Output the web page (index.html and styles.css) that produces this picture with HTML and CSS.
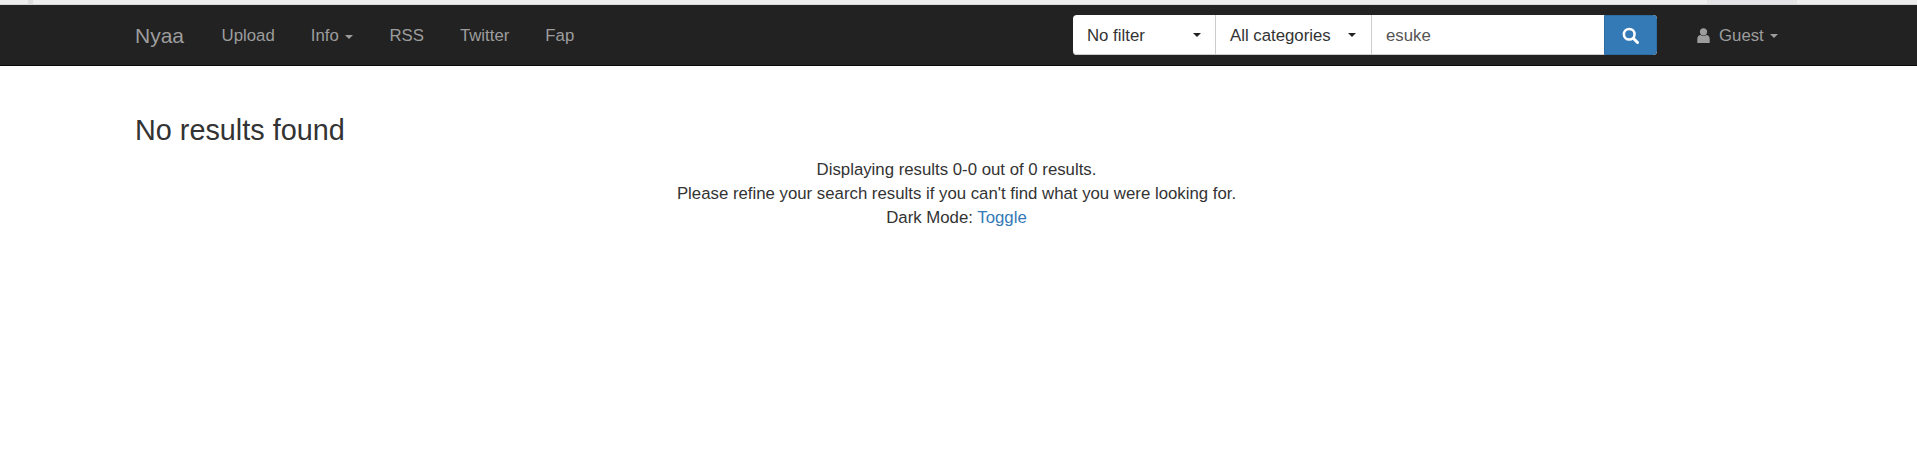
FILE: index.html
```html
<!DOCTYPE html>
<html lang="en">
<head>
<meta charset="utf-8">
<title>Nyaa</title>
<link rel="stylesheet" href="styles.css">
</head>
<body>
<div class="chrome"><span class="chrome-tab"></span><span class="chrome-shadow"></span></div>
<nav class="navbar">
  <div class="nav-inner">
    <a class="brand" href="#">Nyaa</a>
    <ul class="nav-links">
      <li><a href="#">Upload</a></li>
      <li><a href="#">Info <span class="caret"></span></a></li>
      <li><a href="#">RSS</a></li>
      <li><a href="#">Twitter</a></li>
      <li><a href="#">Fap</a></li>
    </ul>
    <form class="search">
      <div class="select filter"><span class="select-label">No filter</span><span class="caret dark"></span></div>
      <div class="select cats"><span class="select-label">All categories</span><span class="caret dark"></span></div>
      <div class="query">esuke</div>
      <button class="go" type="button" aria-label="Search">
        <svg width="17" height="17" viewBox="0 0 16 16"><circle cx="6.8" cy="6.8" r="5" fill="none" stroke="#fff" stroke-width="2.4"/><path d="M10.6 10.6 14.6 14.6" stroke="#fff" stroke-width="2.8" stroke-linecap="round"/></svg>
      </button>
    </form>
    <a class="guest" href="#">
      <svg width="13" height="15" viewBox="0 0 13 15"><circle cx="6.5" cy="3.8" r="3.6" fill="#9d9d9d"/><path d="M0.300 15V11C0.300 8.500 2 7 3.600 7 4.400 7.700 5.400 8.100 6.500 8.100S8.600 7.700 9.400 7C11 7 12.700 8.500 12.700 11V15Z" fill="#9d9d9d"/></svg>
      <span class="guest-name">Guest</span><span class="caret"></span>
    </a>
  </div>
</nav>
<main class="content">
  <h3 class="title">No results found</h3>
  <div class="center">
    Displaying results 0-0 out of 0 results.<br>
    Please refine your search results if you can't find what you were looking for.<br>
    Dark Mode: <a href="#">Toggle</a>
  </div>
</main>
</body>
</html>
```
FILE: styles.css
```css
* { box-sizing: border-box; }
html, body { margin: 0; padding: 0; background: #fff; }
body { font-family: "Liberation Sans", Arial, sans-serif; font-size: 16.8px; line-height: 24px; color: #333; }
a { text-decoration: none; }
.chrome { height: 5px; background: #eeeeee; border-bottom: 1px solid #d8d8d8; display: flex; }
.chrome-tab { width: 5px; height: 4px; margin-left: 28px; background: #dedede; }
.chrome-shadow { width: 90px; height: 4px; margin-left: auto; margin-right: 120px; background: #e4e4e6; }
.navbar { height: 61px; background: #222; border-bottom: 1px solid #080808; }
.nav-inner { width: 1679px; margin-left: 117px; display: flex; align-items: center; height: 60px; }
.brand { color: #9d9d9d; font-size: 21px; padding: 2px 19.5px 0 18px; }
.nav-links { list-style: none; display: flex; margin: 0; padding: 2px 0 0; }
.nav-links a { color: #9d9d9d; display: block; padding: 0 18px; }
.caret { display: inline-block; width: 0; height: 0; margin-left: 2px; vertical-align: middle; border-top: 4px solid #9d9d9d; border-left: 4px solid transparent; border-right: 4px solid transparent; }
.caret.dark { border-top-color: #222; margin: 0; }
.search { display: flex; height: 40px; margin-left: auto; background: #fff; border-radius: 4px; }
.select { display: flex; align-items: center; justify-content: space-between; color: #333; height: 40px; border-right: 1px solid #ccc; border-bottom: 1px solid #ccc; padding: 0 14px; }
.select-label { padding-top: 3px; }
.filter { width: 143px; border-radius: 4px 0 0 4px; }
.cats { width: 156px; padding-right: 15px; }
.query { width: 232px; height: 40px; padding: 0 14px; line-height: 41px; color: #555; border-bottom: 1px solid #ccc; }
.go { width: 53px; height: 40px; border: 1px solid #2e6da4; background: #337ab7; border-radius: 0 4px 4px 0; padding: 0; display: flex; align-items: center; justify-content: center; }
.guest { color: #9d9d9d; margin-left: 40px; display: flex; align-items: center; width: 99px; }
.guest-name { margin-left: 9px; padding-top: 2px; }
.guest .caret { margin-left: 6px; margin-top: 2px; }
.content { width: 1679px; margin-left: 117px; padding: 0 18px; }
.title { font-size: 28.8px; font-weight: 500; line-height: 31.7px; margin: 49px 0 11px; color: #333; }
.center { text-align: center; }
.center a { color: #337ab7; }
```
